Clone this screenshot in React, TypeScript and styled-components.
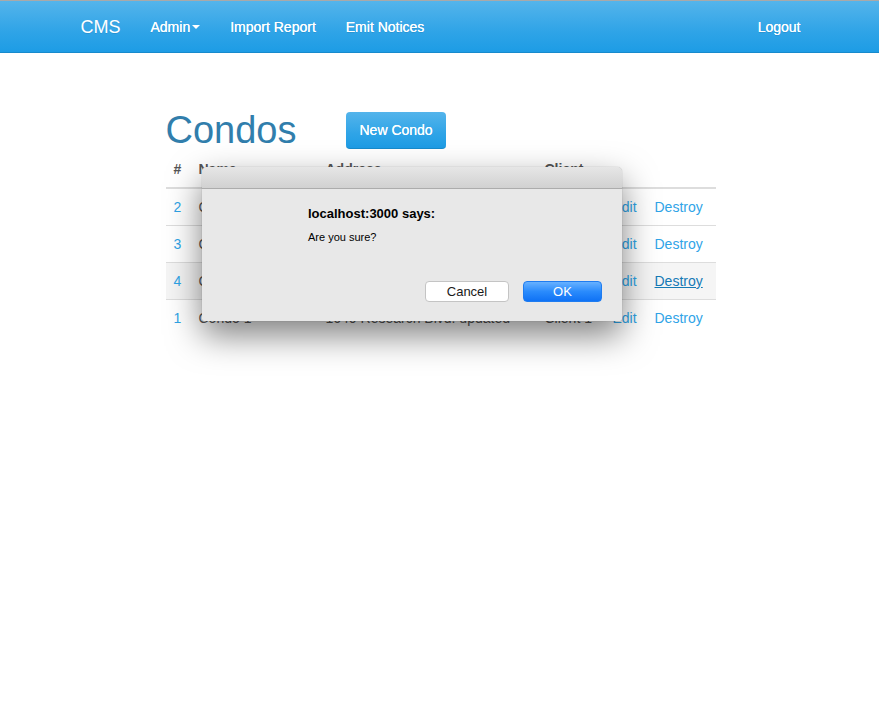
import React from 'react';
import styled, { createGlobalStyle } from 'styled-components';

const GlobalStyle = createGlobalStyle`
  html, body {
    margin: 0;
    padding: 0;
    background: #ffffff;
  }
  body {
    font-family: "Liberation Sans", Arial, Helvetica, sans-serif;
    font-size: 14px;
    line-height: 1.428571429;
    color: #555555;
  }
`;

const Page = styled.div`
  position: relative;
  width: 100%;
  min-height: 724px;
`;

const Navbar = styled.nav`
  height: 51px;
  border-top: 1px solid #a9a9a9;
  border-bottom: 1px solid #178acc;
  background-image: linear-gradient(#54b4eb, #2fa4e7 60%, #1d9ce5);
`;

const NavContainer = styled.div`
  width: 750px;
  margin: 0 auto;
  padding-left: 2px;
  display: flex;
  align-items: center;
  height: 100%;
`;

const Brand = styled.a`
  padding: 16px 15px 15px;
  font-size: 18px;
  line-height: 20px;
  color: #ffffff;
  text-shadow: 0 1px 0 rgba(0, 0, 0, 0.1);
  text-decoration: none;
`;

const NavLink = styled.a<{ right?: boolean }>`
  display: flex;
  align-items: center;
  padding: 16px 15px 15px;
  margin-left: ${(p) => (p.right ? 'auto' : '0')};
  font-size: 14px;
  line-height: 20px;
  color: #ffffff;
  text-shadow: 0 0 0.4px #ffffff, 0 1px 0 rgba(0, 0, 0, 0.1);
  text-decoration: none;
`;

const Caret = styled.span`
  display: inline-block;
  width: 0;
  height: 0;
  margin-left: 2px;
  border-top: 4px solid #ffffff;
  border-left: 4px solid transparent;
  border-right: 4px solid transparent;
`;

const Main = styled.main`
  width: 550px;
  margin: 57px auto 0;
  position: relative;
  left: 1px;
`;

const HeadingRow = styled.div`
  display: flex;
  align-items: center;
  gap: 50px;
`;

const Title = styled.h1`
  margin: 0;
  font-size: 38px;
  font-weight: 500;
  line-height: 41px;
  color: #317eac;
`;

const PrimaryButton = styled.a`
  display: inline-block;
  padding: 8px 13px;
  font-size: 14px;
  line-height: 20px;
  color: #ffffff;
  text-decoration: none;
  text-shadow: 0 0 0.4px #ffffff;
  border-radius: 4px;
  border-bottom: 1px solid #178acc;
  background-image: linear-gradient(#54b4eb, #2fa4e7 60%, #1d9ce5);
`;

const Table = styled.table`
  width: 550px;
  border-collapse: separate;
  border-spacing: 0;
  table-layout: fixed;
`;

const Th = styled.th<{ w: number }>`
  box-sizing: border-box;
  width: ${(p) => p.w}px;
  padding: 8px;
  line-height: 20px;
  text-align: left;
  font-weight: bold;
  color: #555555;
  border-bottom: 2px solid #dddddd;
`;

const Row = styled.tr<{ hovered?: boolean; divided?: boolean }>`
  background: ${(p) => (p.hovered ? '#f5f5f5' : 'transparent')};
  td {
    border-top: ${(p) => (p.divided ? '1px solid #dddddd' : '0')};
  }
`;

const Td = styled.td`
  padding: 8px;
  line-height: 20px;
  white-space: nowrap;
  overflow: hidden;
`;

const Link = styled.a<{ active?: boolean }>`
  color: ${(p) => (p.active ? '#157ab5' : '#2fa4e7')};
  text-decoration: ${(p) => (p.active ? 'underline' : 'none')};
`;

const Dialog = styled.div`
  position: absolute;
  left: 202px;
  top: 167px;
  width: 420px;
  height: 154px;
  display: flex;
  flex-direction: column;
  background: #e8e8e8;
  border-radius: 5px 5px 2px 2px;
  box-shadow: 0 14px 34px rgba(0, 0, 0, 0.5), 0 0 1px rgba(0, 0, 0, 0.4);
  font-family: "Liberation Sans", Arial, sans-serif;
  color: #000000;
  overflow: hidden;
`;

const DialogBar = styled.div`
  height: 21px;
  flex: none;
  background-image: linear-gradient(#e6e6e6, #d1d1d1);
  border-bottom: 1px solid #acacac;
`;

const DialogBody = styled.div`
  flex: 1;
  display: flex;
  flex-direction: column;
  padding: 17px 20px 19px 106px;
`;

const DialogTitle = styled.div`
  font-size: 13px;
  font-weight: bold;
  line-height: 16px;
`;

const DialogMessage = styled.div`
  margin-top: 8px;
  font-size: 11px;
  line-height: 14px;
`;

const DialogActions = styled.div`
  margin-top: auto;
  display: flex;
  justify-content: flex-end;
  gap: 14px;
`;

const DialogButton = styled.button<{ primary?: boolean }>`
  width: ${(p) => (p.primary ? '79px' : '84px')};
  height: 21px;
  padding: 0;
  font-family: "Liberation Sans", Arial, sans-serif;
  font-size: 13px;
  line-height: 19px;
  border-radius: 4px;
  color: ${(p) => (p.primary ? '#ffffff' : '#1a1a1a')};
  border: 1px solid ${(p) => (p.primary ? '#1f7cf0' : '#c4c4c4')};
  background: ${(p) =>
    p.primary ? 'linear-gradient(#67b1ff, #2a8bfc 50%, #0f72f5)' : '#ffffff'};
`;

const condos = [
  { id: 2, name: 'Condo 2', address: '1200 Barton Springs Rd', client: 'Client 2' },
  { id: 3, name: 'Condo 3', address: '500 Congress Ave', client: 'Client 3' },
  { id: 4, name: 'Condo 4', address: '2100 Lamar Blvd', client: 'Client 4' },
  { id: 1, name: 'Condo 1', address: '1640 Research Blvd. updated', client: 'Client 1' }
];

const App = () => {
  return (
    <Page>
      <GlobalStyle />
      <Navbar>
        <NavContainer>
          <Brand href="#">CMS</Brand>
          <NavLink href="#">
            Admin
            <Caret />
          </NavLink>
          <NavLink href="#">Import Report</NavLink>
          <NavLink href="#">Emit Notices</NavLink>
          <NavLink href="#" right>
            Logout
          </NavLink>
        </NavContainer>
      </Navbar>

      <Main>
        <HeadingRow>
          <Title>Condos</Title>
          <PrimaryButton href="#">New Condo</PrimaryButton>
        </HeadingRow>
        <Table>
          <thead>
            <tr>
              <Th w={25}>#</Th>
              <Th w={127}>Name</Th>
              <Th w={219}>Address</Th>
              <Th w={68}>Client</Th>
              <Th w={42}></Th>
              <Th w={69}></Th>
            </tr>
          </thead>
          <tbody>
            {condos.map((c, idx) => (
              <Row key={c.id} hovered={c.id === 4} divided={idx > 0}>
                <Td>
                  <Link href="#">{c.id}</Link>
                </Td>
                <Td>{c.name}</Td>
                <Td>{c.address}</Td>
                <Td>{c.client}</Td>
                <Td>
                  <Link href="#">Edit</Link>
                </Td>
                <Td>
                  <Link href="#" active={c.id === 4}>
                    Destroy
                  </Link>
                </Td>
              </Row>
            ))}
          </tbody>
        </Table>
      </Main>

      <Dialog>
        <DialogBar />
        <DialogBody>
          <DialogTitle>localhost:3000 says:</DialogTitle>
          <DialogMessage>Are you sure?</DialogMessage>
          <DialogActions>
            <DialogButton>Cancel</DialogButton>
            <DialogButton primary>OK</DialogButton>
          </DialogActions>
        </DialogBody>
      </Dialog>
    </Page>
  );
};

export default App;
